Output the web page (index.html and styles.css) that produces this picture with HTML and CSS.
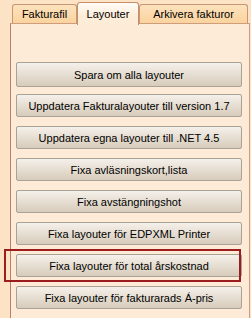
FILE: index.html
```html
<!DOCTYPE html>
<html>
<head>
<meta charset="utf-8">
<link rel="stylesheet" href="styles.css">
</head>
<body>
<div class="page">
  <div class="tabs">
    <div class="tab">Fakturafil</div>
    <div class="tab active">Layouter</div>
    <div class="tab">Arkivera fakturor</div>
  </div>
  <div class="panel">
    <div class="buttons">
      <button class="btn first">Spara om alla layouter</button>
      <button class="btn">Uppdatera Fakturalayouter till version 1.7</button>
      <button class="btn">Uppdatera egna layouter till .NET 4.5</button>
      <button class="btn">Fixa avläsningskort,lista</button>
      <button class="btn">Fixa avstängningshot</button>
      <button class="btn">Fixa layouter för EDPXML Printer</button>
      <button class="btn">Fixa layouter för total årskostnad</button>
      <button class="btn">Fixa layouter för fakturarads Á-pris</button>
    </div>
  </div>
  <div class="highlight"></div>
</div>
</body>
</html>
```

FILE: styles.css
```css
html, body {
  margin: 0;
  padding: 0;
}
body {
  background: #fde3c6;
  font-family: "Liberation Sans", Arial, sans-serif;
  font-size: 11px;
  color: #000;
  width: 251px;
  height: 318px;
  overflow: hidden;
}
.page {
  position: relative;
  width: 251px;
  height: 318px;
}
.tabs {
  display: flex;
  align-items: flex-end;
  height: 24px;
  margin-left: 12px;
  position: relative;
  z-index: 2;
}
.tab {
  box-sizing: border-box;
  height: 19px;
  border: 1px solid #c99673;
  border-bottom: none;
  border-radius: 3px 3px 0 0;
  background: linear-gradient(#fde2bd, #fad39e);
  padding: 2px 0 0 0;
  text-align: center;
  line-height: 14px;
  margin-bottom: 1px;
}
.tab:nth-child(1) { width: 65px; }
.tab:nth-child(2) { width: 62px; }
.tab:nth-child(3) { width: 109px; }
.tab.active {
  height: 23px;
  margin-bottom: 0;
  background: linear-gradient(#fffcf8, #fdecd8 60%);
  padding-top: 4px;
  border-color: #c48f6b;
  position: relative;
  bottom: -1px;
}
.panel {
  box-sizing: border-box;
  margin-left: 10px;
  margin-top: -1px;
  width: 240px;
  height: 296px;
  background: #fdebd7;
  border-top: 1px solid #cf9d7c;
  border-left: 1px solid #b98262;
  border-right: 1px solid #cf9d7c;
  padding: 38px 0 0 5px;
}
.buttons {
  display: flex;
  flex-direction: column;
  gap: 9px;
}
.btn {
  box-sizing: border-box;
  width: 226px;
  height: 23px;
  margin: 0;
  padding: 0;
  font-family: "Liberation Sans", Arial, sans-serif;
  font-size: 11px;
  color: #000;
  background: linear-gradient(#f4f0ea, #e6ded2 50%, #d7ccbc);
  border: 1px solid #aaa295;
  border-radius: 2px;
  text-align: center;
}
.btn.first {
  height: 25px;
  margin-bottom: -2px;
}
.highlight {
  position: absolute;
  left: 4px;
  top: 249px;
  width: 237px;
  height: 33px;
  box-sizing: border-box;
  border: 2px solid #9c1d1d;
  z-index: 3;
}
```
